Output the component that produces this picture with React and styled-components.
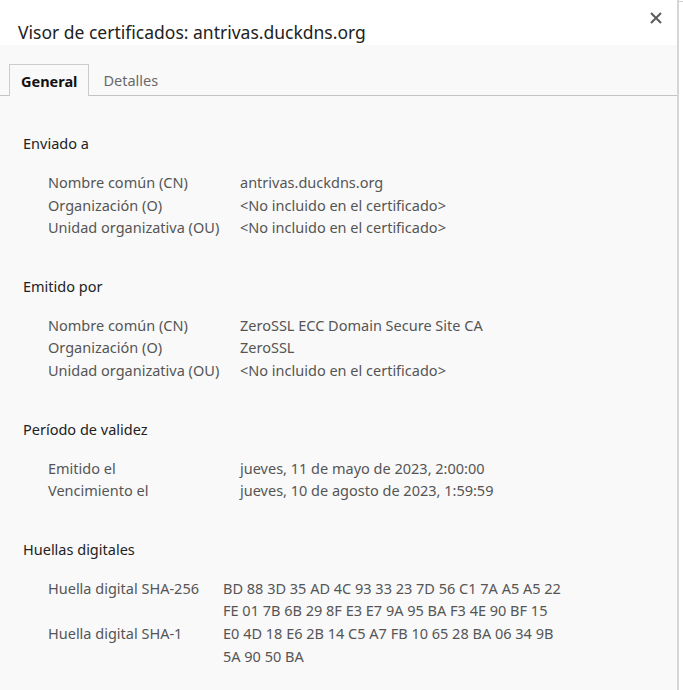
import React from "react";
import styled, { createGlobalStyle } from "styled-components";

const GlobalStyle = createGlobalStyle`
  html, body {
    margin: 0;
    padding: 0;
    background: #ffffff;
  }
  body {
    font-family: "Noto Sans", "Open Sans", sans-serif;
  }
`;

const sections = [
  {
    title: "Enviado a",
    labelWidth: 192,
    rows: [
      ["Nombre común (CN)", ["antrivas.duckdns.org"]],
      ["Organización (O)", ["<No incluido en el certificado>"]],
      ["Unidad organizativa (OU)", ["<No incluido en el certificado>"]],
    ],
  },
  {
    title: "Emitido por",
    labelWidth: 192,
    rows: [
      ["Nombre común (CN)", ["ZeroSSL ECC Domain Secure Site CA"]],
      ["Organización (O)", ["ZeroSSL"]],
      ["Unidad organizativa (OU)", ["<No incluido en el certificado>"]],
    ],
  },
  {
    title: "Período de validez",
    labelWidth: 192,
    rows: [
      ["Emitido el", ["jueves, 11 de mayo de 2023, 2:00:00"]],
      ["Vencimiento el", ["jueves, 10 de agosto de 2023, 1:59:59"]],
    ],
  },
  {
    title: "Huellas digitales",
    labelWidth: 175,
    rows: [
      [
        "Huella digital SHA-256",
        [
          "BD 88 3D 35 AD 4C 93 33 23 7D 56 C1 7A A5 A5 22",
          "FE 01 7B 6B 29 8F E3 E7 9A 95 BA F3 4E 90 BF 15",
        ],
      ],
      [
        "Huella digital SHA-1",
        [
          "E0 4D 18 E6 2B 14 C5 A7 FB 10 65 28 BA 06 34 9B",
          "5A 90 50 BA",
        ],
      ],
    ],
  },
];

export default function App() {
  return (
    <>
      <GlobalStyle />
      <Screen>
        <Dialog>
          <Header>
            <Title>Visor de certificados: antrivas.duckdns.org</Title>
            <CloseButton aria-label="Cerrar">
              <svg width="12" height="12" viewBox="0 0 12 12">
                <path
                  d="M1 1 L11 11 M11 1 L1 11"
                  stroke="#5a5a5a"
                  strokeWidth="2"
                  fill="none"
                />
              </svg>
            </CloseButton>
          </Header>
          <Body>
            <Tabs>
              <Tab active>General</Tab>
              <Tab>Detalles</Tab>
            </Tabs>
            <Content>
              {sections.map((s) => (
                <Section key={s.title}>
                  <SectionTitle>{s.title}</SectionTitle>
                  <Table labelWidth={s.labelWidth}>
                    {s.rows.map(([label, lines]) => (
                      <React.Fragment key={label}>
                        <Label>{label}</Label>
                        <Value>
                          {lines.map((l) => (
                            <Line key={l}>{l}</Line>
                          ))}
                        </Value>
                      </React.Fragment>
                    ))}
                  </Table>
                </Section>
              ))}
            </Content>
          </Body>
        </Dialog>
        <Edge />
      </Screen>
    </>
  );
}

const Screen = styled.div`
  display: flex;
  width: 683px;
  height: 690px;
  overflow: hidden;
`;

const Dialog = styled.div`
  display: flex;
  flex-direction: column;
  width: 677px;
  height: 690px;
  border-right: 2px solid #d6d6d6;
  background: #f9f9f9;
`;

const Edge = styled.div`
  flex: 1;
  background: #ffffff;
  border-top: 1px solid #d0d0d0;
  margin-top: 1px;
  height: 689px;
`;

const Header = styled.div`
  position: relative;
  height: 45px;
  background: #ffffff;
  display: flex;
  align-items: flex-end;
  padding-left: 18px;
  box-sizing: border-box;
`;

const Title = styled.h1`
  margin: 0 0 1px 0;
  font-size: 17.5px;
  font-weight: 400;
  color: #222222;
  line-height: 24px;
`;

const CloseButton = styled.button`
  position: absolute;
  top: 11px;
  right: 14px;
  width: 14px;
  height: 14px;
  padding: 0;
  border: none;
  background: transparent;
  display: flex;
  align-items: center;
  justify-content: center;
`;

const Body = styled.div`
  flex: 1;
  display: flex;
  flex-direction: column;
  padding-top: 19px;
`;

const Tabs = styled.div`
  display: flex;
  padding-left: 9px;
  border-bottom: 1px solid #c4c4c4;
  height: 31px;
`;

const Tab = styled.div`
  display: flex;
  align-items: center;
  padding: 0 ${(p) => (p.active ? "11px" : "14px")};
  font-size: 14.5px;
  font-weight: ${(p) => (p.active ? 700 : 400)};
  color: ${(p) => (p.active ? "#111111" : "#6a6a6a")};
  background: ${(p) => (p.active ? "#f9f9f9" : "transparent")};
  border: ${(p) => (p.active ? "1px solid #cccccc" : "none")};
  border-bottom: none;
  margin-bottom: ${(p) => (p.active ? "-1px" : "0")};
  height: ${(p) => (p.active ? "32px" : "31px")};
  box-sizing: border-box;
`;

const Content = styled.div`
  display: flex;
  flex-direction: column;
  gap: 36px;
  padding: 36px 0 0 23px;
`;

const Section = styled.div`
  display: flex;
  flex-direction: column;
  gap: 16px;
`;

const SectionTitle = styled.div`
  font-size: 14.5px;
  color: #222222;
  line-height: 23px;
`;

const Table = styled.div`
  display: grid;
  grid-template-columns: ${(p) => p.labelWidth}px auto;
  padding-left: 25px;
  font-size: 14.5px;
  line-height: 22.6px;
  color: #555555;
`;

const Label = styled.div``;

const Value = styled.div`
  display: flex;
  flex-direction: column;
`;

const Line = styled.span`
  white-space: nowrap;
`;
